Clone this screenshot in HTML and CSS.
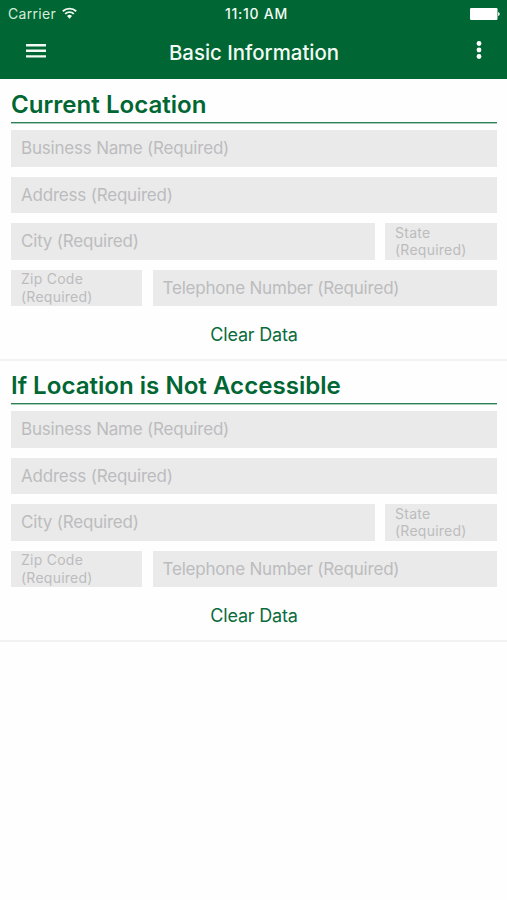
FILE: index.html
```html
<!DOCTYPE html>
<html lang="en">
<head>
<meta charset="utf-8">
<title>Basic Information</title>
<link rel="stylesheet" href="styles.css">
</head>
<body>
<header class="header">
  <div class="status">
    <div class="carrier"><span>Carrier</span>
      <svg class="wifi" width="15" height="12" viewBox="0 0 15 12" fill="none" stroke="#f0faf2" stroke-width="1.9"><path d="M.8 4.3a9.6 9.6 0 0 1 13.4 0M3.2 6.9a6.1 6.1 0 0 1 8.6 0"/><path d="M7.5 11.8 5 9a3.5 3.5 0 0 1 5 0z" fill="#f0faf2" stroke="none"/></svg>
    </div>
    <span class="time">11:10 AM</span>
    <svg class="battery" width="30" height="12" viewBox="0 0 30 12" fill="#fff"><rect width="27.5" height="12" rx="1.2"/><path d="M28.1 4c2.1.3 2.1 3.7 0 4z"/></svg>
  </div>
  <div class="nav">
    <svg class="menu" width="20" height="14" viewBox="0 0 20 14" fill="#f2fbf4"><path d="M0 0h20v2.4H0zM0 5.6h20V8H0zM0 11.2h20v2.4H0z"/></svg>
    <h1 class="title">Basic Information</h1>
    <svg class="more" width="6" height="18" viewBox="0 0 6 18" fill="#fff"><circle cx="3" cy="2.5" r="2.4"/><circle cx="3" cy="9" r="2.4"/><circle cx="3" cy="15.5" r="2.4"/></svg>
  </div>
</header>
<main>
  <section class="section">
    <h2 class="heading">Current Location</h2>
    <div class="fields">
      <div class="field"><span>Business Name (Required)</span></div>
      <div class="field"><span>Address (Required)</span></div>
      <div class="row city-row">
        <div class="field"><span>City (Required)</span></div>
        <div class="field small"><span>State<br>(Required)</span></div>
      </div>
      <div class="row zip-row">
        <div class="field small"><span>Zip Code<br>(Required)</span></div>
        <div class="field"><span>Telephone Number (Required)</span></div>
      </div>
    </div>
    <div class="clear">Clear Data</div>
  </section>
  <section class="section">
    <h2 class="heading">If Location is Not Accessible</h2>
    <div class="fields">
      <div class="field"><span>Business Name (Required)</span></div>
      <div class="field"><span>Address (Required)</span></div>
      <div class="row city-row">
        <div class="field"><span>City (Required)</span></div>
        <div class="field small"><span>State<br>(Required)</span></div>
      </div>
      <div class="row zip-row">
        <div class="field small"><span>Zip Code<br>(Required)</span></div>
        <div class="field"><span>Telephone Number (Required)</span></div>
      </div>
    </div>
    <div class="clear">Clear Data</div>
  </section>
</main>
</body>
</html>
```
FILE: styles.css
```css
* { box-sizing: border-box; }
body {
  margin: 0;
  background: #fefefe;
  font-family: Inter, "Liberation Sans", sans-serif;
  white-space: nowrap;
}
h1, h2 { margin: 0; }
svg { display: block; }
main { padding-top: 1px; }
.header {
  height: 79px;
  background: #006633;
  color: #f2fbf4;
}
.status {
  height: 27px;
  padding: 0 7px 0 8px;
  display: grid;
  grid-template-columns: 1fr auto 1fr;
  align-items: center;
}
.carrier {
  display: flex;
  align-items: center;
  gap: 6px;
  font-size: 14px;
  letter-spacing: 0.3px;
  color: #d5eedb;
}
.wifi { margin-top: -2px; }
.time {
  margin-left: 5px;
  font-size: 14px;
  font-weight: 500;
  letter-spacing: 0.75px;
}
.battery { justify-self: end; }
.nav {
  height: 50px;
  padding: 0 25px 0 26px;
  display: grid;
  grid-template-columns: 1fr auto 1fr;
  align-items: center;
}
.title { margin-top: 2px; font-size: 20.4px; line-height: 24px; font-weight: 500; }
.menu { margin-top: -3px; }
.more { justify-self: end; margin-top: -4px; }
.section {
  height: 281px;
  padding: 9px 10px 0 11px;
  border-bottom: 2px solid #f2f2f2;
}
.heading {
  height: 34px;
  border-bottom: 1px solid #2d7f56;
  box-shadow: 0 1px #a9cdbb;
  color: #006633;
  font-size: 24.1px;
  line-height: 32px;
  font-weight: 600;
}
.fields {
  margin-top: 7.3px;
  display: grid;
  grid-auto-rows: 36.5px;
  gap: 10px;
}
.row { display: grid; }
.city-row { grid-template-columns: 1fr 112px; gap: 10px; }
.zip-row { grid-template-columns: 130.5px 1fr; gap: 11px; }
.field {
  padding: 0 0 1px 10px;
  display: flex;
  align-items: center;
  background: #eaeaea;
  color: #bcbcbe;
  font-size: 17px;
  letter-spacing: -0.2px;
}
.small { font-size: 14px; line-height: 17.5px; letter-spacing: 0.25px; }
.clear {
  height: 54px;
  line-height: 57.5px;
  text-align: center;
  font-size: 18px;
  letter-spacing: -0.2px;
  color: #0a6b3c;
}
```
